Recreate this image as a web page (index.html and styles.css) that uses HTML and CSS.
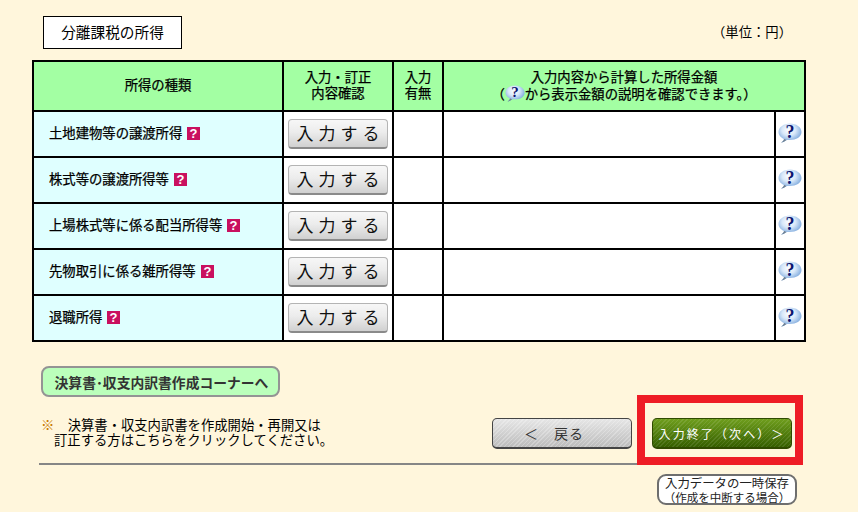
FILE: index.html
```html
<!DOCTYPE html>
<html lang="ja">
<head>
    <meta charset="UTF-8">
    <title>分離課税の所得</title>
    <link rel="stylesheet" href="styles.css">
</head>
<body>
    <svg class="defs" width="0" height="0">
        <defs>
            <radialGradient id="bubble-fill" cx="45%" cy="35%" r="65%">
                <stop offset="0" stop-color="#ffffff"/>
                <stop offset="0.45" stop-color="#d8e8f9"/>
                <stop offset="1" stop-color="#6f9fd8"/>
            </radialGradient>
            <symbol id="bubble" viewBox="0 0 24 20">
                <path d="M3 19.500 C5 18.500 6 17 6 16 C3 14.500 0.500 12.500 0.500 9 C0.500 4 6 0.500 12 0.500 C18 0.500 23.500 4 23.500 9 C23.500 14 18 17 12 17 C10 17 8 17 7.500 17.500 C6.500 18.500 5 19.500 3 19.500 Z" fill="url(#bubble-fill)"/>
                <path d="M3 19.500 C5 18.500 6 17 6 16 L8.500 17 C6.500 18.500 5 19.500 3 19.500 Z" fill="#6f7f8e"/>
                <text x="12" y="14.500" text-anchor="middle" class="bubble-mark">?</text>
            </symbol>
            <symbol id="pink-help" viewBox="0 0 13 13">
                <rect width="13" height="13" fill="#c9105f"/>
                <text x="6.500" y="11" text-anchor="middle" class="pink-mark">?</text>
            </symbol>
        </defs>
    </svg>

    <div class="page-head">
        <div class="page-title">分離課税の所得</div>
        <div class="unit">（単位：円）</div>
    </div>

    <table class="income-table">
        <colgroup>
            <col class="col-kind">
            <col class="col-input">
            <col class="col-flag">
            <col class="col-amount">
            <col class="col-help">
        </colgroup>
        <thead>
            <tr>
                <th>所得の種類</th>
                <th>入力・訂正<br>内容確認</th>
                <th>入力<br>有無</th>
                <th colspan="2">
                    入力内容から計算した所得金額<br>
                    （<svg class="bubble-inline"><use href="#bubble"/></svg>から表示金額の説明を確認できます。）
                </th>
            </tr>
        </thead>
        <tbody>
            <tr>
                <td class="kind">土地建物等の譲渡所得<svg class="pink"><use href="#pink-help"/></svg></td>
                <td class="action"><button class="input-btn">入力する</button></td>
                <td></td>
                <td></td>
                <td><svg class="bubble"><use href="#bubble"/></svg></td>
            </tr>
            <tr>
                <td class="kind">株式等の譲渡所得等<svg class="pink"><use href="#pink-help"/></svg></td>
                <td class="action"><button class="input-btn">入力する</button></td>
                <td></td>
                <td></td>
                <td><svg class="bubble"><use href="#bubble"/></svg></td>
            </tr>
            <tr>
                <td class="kind">上場株式等に係る配当所得等<svg class="pink"><use href="#pink-help"/></svg></td>
                <td class="action"><button class="input-btn">入力する</button></td>
                <td></td>
                <td></td>
                <td><svg class="bubble"><use href="#bubble"/></svg></td>
            </tr>
            <tr>
                <td class="kind">先物取引に係る雑所得等<svg class="pink"><use href="#pink-help"/></svg></td>
                <td class="action"><button class="input-btn">入力する</button></td>
                <td></td>
                <td></td>
                <td><svg class="bubble"><use href="#bubble"/></svg></td>
            </tr>
            <tr>
                <td class="kind">退職所得<svg class="pink"><use href="#pink-help"/></svg></td>
                <td class="action"><button class="input-btn">入力する</button></td>
                <td></td>
                <td></td>
                <td><svg class="bubble"><use href="#bubble"/></svg></td>
            </tr>
        </tbody>
    </table>

    <button class="corner-btn">決算書･収支内訳書作成コーナーへ</button>

    <div class="foot-row">
        <p class="note">
            <span class="note-mark">※</span>　決算書・収支内訳書を作成開始・再開又は<br>
            <span class="note-indent">訂正する方はこちらをクリックしてください。</span>
        </p>
        <div class="nav">
            <button class="back-btn">＜　戻る</button>
            <button class="next-btn">入力終了（次へ）＞</button>
            <div class="highlight"></div>
        </div>
    </div>

    <div class="rule"></div>

    <div class="save-row">
        <button class="save-btn">入力データの一時保存<small>（作成を中断する場合）</small></button>
    </div>
</body>
</html>
```

FILE: styles.css
```css
body {
    margin: 0;
    height: 512px;
    overflow: hidden;
    background-color: #fff6dc;
    color: #000;
    font-family: "Noto Sans CJK JP", "Liberation Sans", sans-serif;
    font-size: 13.33px;
}

button {
    font-family: inherit;
    padding: 0;
    cursor: pointer;
}

.defs {
    position: absolute;
}

.bubble-mark {
    font-family: "Liberation Serif", serif;
    font-size: 18px;
    font-weight: bold;
    fill: #0c1670;
}

.pink-mark {
    font-family: "Liberation Sans", sans-serif;
    font-size: 13px;
    font-weight: bold;
    fill: #fff;
}

.page-head {
    display: flex;
    justify-content: space-between;
    align-items: center;
    padding: 16px 66px 0 43px;
}

.page-title {
    width: 137px;
    height: 31px;
    line-height: 29px;
    border: 1px solid #000;
    background-color: #fff;
    text-align: center;
    font-size: 14.67px;
}

.unit {
    padding-bottom: 3px;
}

.income-table {
    margin: 11px 0 0 32px;
    width: 774px;
    table-layout: fixed;
    border-collapse: collapse;
    border: 2px solid #000;
}

.income-table th,
.income-table td {
    border: 2px solid #000;
    padding: 0;
}

.income-table th {
    height: 46px;
    padding-bottom: 2px;
    background-color: #a3ffa3;
    font-weight: normal;
    -webkit-text-stroke: 0.25px #000;
    line-height: 16px;
    text-align: center;
}

.income-table td {
    height: 44px;
    background-color: #fff;
}

.col-kind {
    width: 250px;
}

.col-input {
    width: 110px;
}

.col-flag {
    width: 50px;
}

.col-amount {
    width: 332px;
}

.col-help {
    width: 30px;
}

.income-table .kind {
    height: 41px;
    background-color: #dfffff;
    padding: 0 0 3px 15px;
    -webkit-text-stroke: 0.25px #000;
}

.pink {
    width: 13px;
    height: 13px;
    margin-left: 5px;
    vertical-align: -2px;
}

.bubble {
    display: block;
    width: 24px;
    height: 20px;
    margin: -2px auto 0;
}

.bubble-inline {
    width: 20px;
    height: 17px;
    vertical-align: -3px;
}

.input-btn {
    display: block;
    width: 100px;
    height: 30px;
    margin: -1px auto 0;
    border: 1px solid #b4b4b4;
    border-bottom: 2px solid #8a8a8a;
    border-radius: 4px;
    background: linear-gradient(#f7f7f7, #ececec 45%, #d0d0d0);
    color: #111;
    font-size: 17px;
    letter-spacing: 5px;
    text-indent: 5px;
    line-height: 26px;
}

.corner-btn {
    display: block;
    width: 239px;
    height: 31px;
    margin: 24px 0 0 41px;
    padding-left: 2px;
    border: 2px solid #949494;
    border-radius: 8px;
    background-color: #bbffbb;
    color: #333;
    font-size: 13.800px;
    font-weight: bold;
    white-space: nowrap;
}

.foot-row {
    display: flex;
    justify-content: space-between;
    align-items: flex-start;
    padding: 21px 66px 0 41px;
}

.note {
    margin: -1px 0 0;
    line-height: 15px;
}

.note-mark {
    color: #c87800;
}

.note-indent {
    padding-left: 13px;
}

.nav {
    position: relative;
    display: flex;
    gap: 20px;
}

.back-btn,
.next-btn {
    width: 140px;
    height: 31px;
    border-radius: 5px;
    border: 1px solid #444;
    border-bottom-width: 2px;
    white-space: nowrap;
}

.back-btn {
    padding-right: 16px;
    background:
        repeating-linear-gradient(135deg, rgba(255, 255, 255, 0.25) 0 1px, transparent 1px 3px),
        linear-gradient(#e6e6e6, #bcbcbc);
    color: #333;
    font-size: 14px;
    letter-spacing: 1px;
}

.next-btn {
    border-color: #2f4a00;
    background:
        repeating-linear-gradient(135deg, rgba(255, 255, 255, 0.1) 0 1px, transparent 1px 3px),
        linear-gradient(#6f9e1d, #365f00);
    color: #fff;
    font-size: 12px;
    letter-spacing: 2.100px;
}

/* red marker drawn over the next button */
.highlight {
    position: absolute;
    left: 145px;
    top: -23px;
    width: 150px;
    height: 54px;
    border: 8px solid #ee1c25;
}

.rule {
    width: 598px;
    height: 2px;
    margin: 14px 0 0 39px;
    background-color: #868686;
}

.save-row {
    display: flex;
    justify-content: flex-end;
    padding: 9px 61px 0 0;
}

.save-btn {
    width: 140px;
    height: 31px;
    border: 2px solid #6e6e6e;
    border-radius: 9px;
    background-color: #fff;
    color: #222;
    font-size: 12.400px;
    line-height: 14px;
    white-space: nowrap;
}

.save-btn small {
    display: block;
    font-size: 11.500px;
}
```
